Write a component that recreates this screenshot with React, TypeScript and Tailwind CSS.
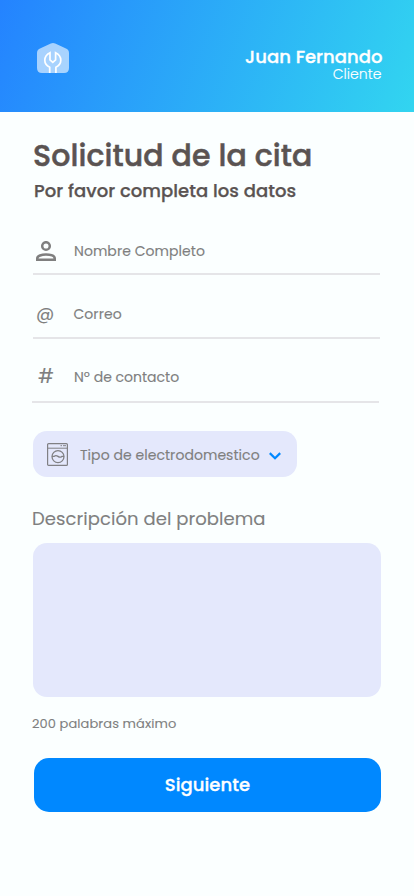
import type { ReactNode } from 'react';

function LogoIcon() {
  return (
    <svg className="mt-[43px] h-[30px] w-8" viewBox="0 0 32 30" fill="none">
      <path
        d="M13.8.5Q16-.5 18.2.5L29 5.6Q32 7 32 10V25Q32 30 27 30H5Q0 30 0 25V10Q0 7 3 5.6Z"
        fill="#fff"
        fillOpacity=".6"
      />
      <path
        d="M12.7 30V24.2Q7.8 21.7 7.8 17.2Q7.8 12.2 13 9.7V16.8L15.8 19.3L18.6 16.8V9.7Q23.8 12.2 23.8 17.2Q23.8 21.7 18.9 24.2V30"
        stroke="#fff"
        strokeWidth="1.7"
      />
    </svg>
  );
}

function PersonIcon() {
  return (
    <svg className="h-5 w-5" viewBox="0 0 20 20" fill="none" stroke="#7f7f7f" strokeWidth="2.5">
      <circle cx="10" cy="5" r="3.8" />
      <path d="M1.25 18.75V17.4C1.25 14.8 5.7 13.6 10 13.6S18.75 14.8 18.75 17.4V18.75Z" />
    </svg>
  );
}

function WasherIcon() {
  return (
    <svg className="h-[23px] w-[21px]" viewBox="0 0 21 23" fill="none" stroke="#808084">
      <rect x=".6" y=".6" width="19.8" height="21.8" rx="1" strokeWidth="1.2" />
      <path d="M.6 5.2H20.4M13.5 2.7H15M16 2.7H19" />
      <circle cx="11" cy="13.6" r="6" strokeWidth="1.3" />
      <path d="M5 13.4H7.2C8.6 11.9 9.6 12.4 11 13.4S13.4 14.7 14.8 13.4H17" strokeWidth="1.3" />
    </svg>
  );
}

function Field({ icon, children, className }: { icon: ReactNode; children: ReactNode; className: string }) {
  return (
    <div className={`flex w-[347px] items-center border-b-2 border-[#e5e5e8] text-sm leading-5 tracking-[0.05px] ${className}`}>
      <span className="flex w-[41px] shrink-0 items-center pl-[3px]">{icon}</span>
      {children}
    </div>
  );
}

export default function App() {
  return (
    <div className="h-[896px] w-[414px] overflow-hidden bg-[#fbffff] font-['Poppins','Inter',sans-serif] text-[#7f7f7f] [-webkit-text-stroke:0.12px]">
      <header className="flex h-28 justify-between bg-[linear-gradient(111deg,#2483ff_0%,#32d5f0_100%)] pr-[31.5px] pl-[37px] text-white">
        <LogoIcon />
        <div className="flex flex-col items-end pt-[48px]">
          <span className="text-[18px] leading-[18px] font-medium tracking-[0.04px] [-webkit-text-stroke:0.3px]">Juan Fernando</span>
          <span className="pr-px text-sm leading-4 font-light tracking-[0.05px]">Cliente</span>
        </div>
      </header>
      <main className="flex flex-col pl-[33px]">
        <h1 className="mt-6 h-10 text-[30px] leading-10 font-medium tracking-[0.08px] text-[#5a5352] [-webkit-text-stroke:0.5px]">Solicitud de la cita</h1>
        <h2 className="mt-[3px] h-6 pl-px text-[18px] leading-6 font-medium tracking-[0.05px] text-[#5a5352] [-webkit-text-stroke:0.25px]">Por favor completa los datos</h2>
        <Field className="mt-[26px] h-[46px]" icon={<PersonIcon />}>
          Nombre Completo
        </Field>
        <Field className="mt-[16px] h-12" icon={<span className="pb-px text-[18px] leading-5">@</span>}>
          <span className="-ml-[0.5px]">Correo</span>
        </Field>
        <Field className="mt-[14px] -ml-px h-[50px]" icon={<span className="pl-[3px] text-[19px] leading-5">#</span>}>
          <span className="pl-px tracking-normal">Nº de contacto</span>
        </Field>
        <button className="mt-7 flex h-[46px] w-[264px] items-center rounded-[14px] bg-[#e4e8fc] pl-3.5 text-sm">
          <WasherIcon />
          <span className="mt-0.5 ml-3 w-[189px] text-left tracking-[0.05px] whitespace-nowrap">Tipo de electrodomestico</span>
          <svg className="mt-1 h-2 w-3" viewBox="0 0 12 8" fill="none" stroke="#0088ff" strokeWidth="2.2">
            <path d="M.8 1.1L6 6.2L11.2 1.1" />
          </svg>
        </button>
        <label htmlFor="problema" className="mt-[30px] -ml-px h-6 text-[18px] leading-6 tracking-[0.06px]">Descripción del problema</label>
        <textarea id="problema" className="mt-3 h-[154px] w-[348px] resize-none rounded-[14px] bg-[#e4e8fc] outline-none" />
        <p className="mt-[17px] -ml-px h-5 text-[13px] leading-5 tracking-[0.08px]">200 palabras máximo</p>
        <button className="mt-6 ml-px h-[54px] w-[347px] rounded-[15px] bg-[#0088ff] pb-0.5 text-[18px] font-medium tracking-[0.08px] text-white [-webkit-text-stroke:0.3px]">Siguiente</button>
      </main>
    </div>
  );
}
